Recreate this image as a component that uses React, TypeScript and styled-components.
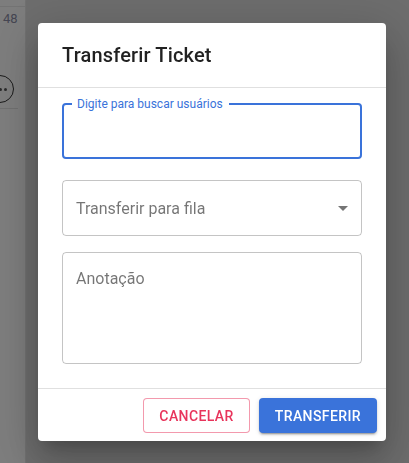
import React from "react";
import styled, { createGlobalStyle } from "styled-components";

const BLUE = "#3a73da";
const RED = "#e8345b";

const GlobalStyle = createGlobalStyle`
  html, body { margin: 0; padding: 0; }
  body {
    font-family: Roboto, "Liberation Sans", Arial, sans-serif;
    overflow: hidden;
  }
  * { box-sizing: border-box; }
`;

const Page = styled.div`
  display: flex;
  width: 100vw;
  height: 100vh;
  background: #dadada;
`;

const Sidebar = styled.div`
  width: 26px;
  flex: 0 0 26px;
  background: #fbfbfb;
  border-right: 1px solid #e2e2e2;
  overflow: hidden;
  display: flex;
  flex-direction: column;
`;

const TopRule = styled.div`
  height: 7px;
  border-bottom: 1px solid #e6e6e6;
`;

const Time = styled.div`
  margin-top: 4px;
  padding-left: 3px;
  font-size: 13px;
  line-height: 16px;
  color: #8a8ca4;
  white-space: nowrap;
`;

const MoreButton = styled.div`
  margin-top: 48px;
  margin-left: -14px;
  width: 28px;
  height: 28px;
  border-radius: 50%;
  border: 1.5px solid #333;
  display: flex;
  align-items: center;
  justify-content: flex-end;
  padding-right: 6px;
  gap: 2px;
`;

const Dot = styled.span`
  width: 3px;
  height: 3px;
  border-radius: 50%;
  background: #555;
`;

const BottomRule = styled.div`
  margin-top: 5px;
  width: 18px;
  height: 1px;
  background: #e0e0e0;
`;

const Main = styled.div`
  flex: 1;
`;

const Backdrop = styled.div`
  position: fixed;
  inset: 0;
  background: rgba(0, 0, 0, 0.5);
  display: flex;
  align-items: flex-start;
  justify-content: flex-start;
  padding: 23px 0 0 38px;
`;

const Paper = styled.div`
  width: 348px;
  background: #fff;
  border-radius: 4px;
  display: flex;
  flex-direction: column;
  box-shadow: 0px 11px 15px -7px rgba(0, 0, 0, 0.2),
    0px 24px 38px 3px rgba(0, 0, 0, 0.14),
    0px 9px 46px 8px rgba(0, 0, 0, 0.12);
`;

const Title = styled.h2`
  margin: 0;
  padding: 16px 24px;
  font-size: 20px;
  font-weight: 500;
  line-height: 32px;
  letter-spacing: 0.0075em;
  color: rgba(0, 0, 0, 0.87);
`;

const Content = styled.div`
  display: flex;
  flex-direction: column;
  padding: 15px 24px 16px;
  border-top: 1px solid rgba(0, 0, 0, 0.12);
  border-bottom: 1px solid rgba(0, 0, 0, 0.12);
`;

const Field = styled.div<{ $focused?: boolean; $height: number; $mb: number }>`
  position: relative;
  height: ${(p) => p.$height}px;
  margin-bottom: ${(p) => p.$mb}px;
  border-radius: 4px;
  border: ${(p) => (p.$focused ? `2px solid ${BLUE}` : "1px solid rgba(0, 0, 0, 0.23)")};
  display: flex;
  align-items: center;
`;

const FloatingLabel = styled.label`
  position: absolute;
  top: -8px;
  left: 8px;
  padding: 0 6px 0 5px;
  background: #fff;
  font-size: 12px;
  line-height: 14px;
  color: ${BLUE};
  white-space: nowrap;
`;

const TextInput = styled.input`
  border: none;
  outline: none;
  background: transparent;
  width: 100%;
  padding: 0 13px;
  font: inherit;
  font-size: 16px;
`;

const SelectValue = styled.div`
  flex: 1;
  padding-left: 13px;
  font-size: 16px;
  line-height: 19px;
  color: rgba(0, 0, 0, 0.54);
`;

const ArrowIcon = styled.svg`
  position: absolute;
  right: 6px;
  top: calc(50% - 12px);
  width: 24px;
  height: 24px;
  fill: rgba(0, 0, 0, 0.54);
`;

const TextArea = styled.textarea`
  align-self: stretch;
  width: 100%;
  border: none;
  outline: none;
  resize: none;
  background: transparent;
  padding: 16px 13px;
  font-family: Roboto, "Liberation Sans", Arial, sans-serif;
  font-size: 16px;
  line-height: 19px;
  &::placeholder {
    color: rgba(0, 0, 0, 0.54);
    opacity: 1;
  }
`;

const Actions = styled.div`
  display: flex;
  justify-content: flex-end;
  align-items: center;
  gap: 9px;
  padding: 9px 9px 8px 8px;
`;

const Button = styled.button<{ $variant: "outlined" | "contained" }>`
  height: 35px;
  font-family: Roboto, "Liberation Sans", Arial, sans-serif;
  font-size: 14px;
  font-weight: 500;
  letter-spacing: 0.02857em;
  text-transform: uppercase;
  border-radius: 4px;
  cursor: pointer;
  ${(p) =>
    p.$variant === "outlined"
      ? `
    padding: 5px 15px;
    background: #fff;
    color: ${RED};
    border: 1px solid rgba(232, 52, 91, 0.5);
  `
      : `
    padding: 6px 16px;
    background: ${BLUE};
    color: #fff;
    border: none;
    box-shadow: 0px 3px 1px -2px rgba(0,0,0,0.2), 0px 2px 2px 0px rgba(0,0,0,0.14), 0px 1px 5px 0px rgba(0,0,0,0.12);
  `}
`;

export default function App() {
  return (
    <>
      <GlobalStyle />
      <Page>
        <Sidebar>
          <TopRule />
          <Time>48</Time>
          <MoreButton>
            <Dot />
            <Dot />
          </MoreButton>
          <BottomRule />
        </Sidebar>
        <Main />
      </Page>
      <Backdrop>
        <Paper>
          <Title>Transferir Ticket</Title>
          <Content>
            <Field $focused $height={56} $mb={21}>
              <FloatingLabel>Digite para buscar usuários</FloatingLabel>
              <TextInput />
            </Field>
            <Field $height={56} $mb={16}>
              <SelectValue>Transferir para fila</SelectValue>
              <ArrowIcon viewBox="0 0 24 24">
                <path d="M7 10l5 5 5-5z" />
              </ArrowIcon>
            </Field>
            <Field $height={112} $mb={8}>
              <TextArea placeholder="Anotação" />
            </Field>
          </Content>
          <Actions>
            <Button $variant="outlined">Cancelar</Button>
            <Button $variant="contained">Transferir</Button>
          </Actions>
        </Paper>
      </Backdrop>
    </>
  );
}
